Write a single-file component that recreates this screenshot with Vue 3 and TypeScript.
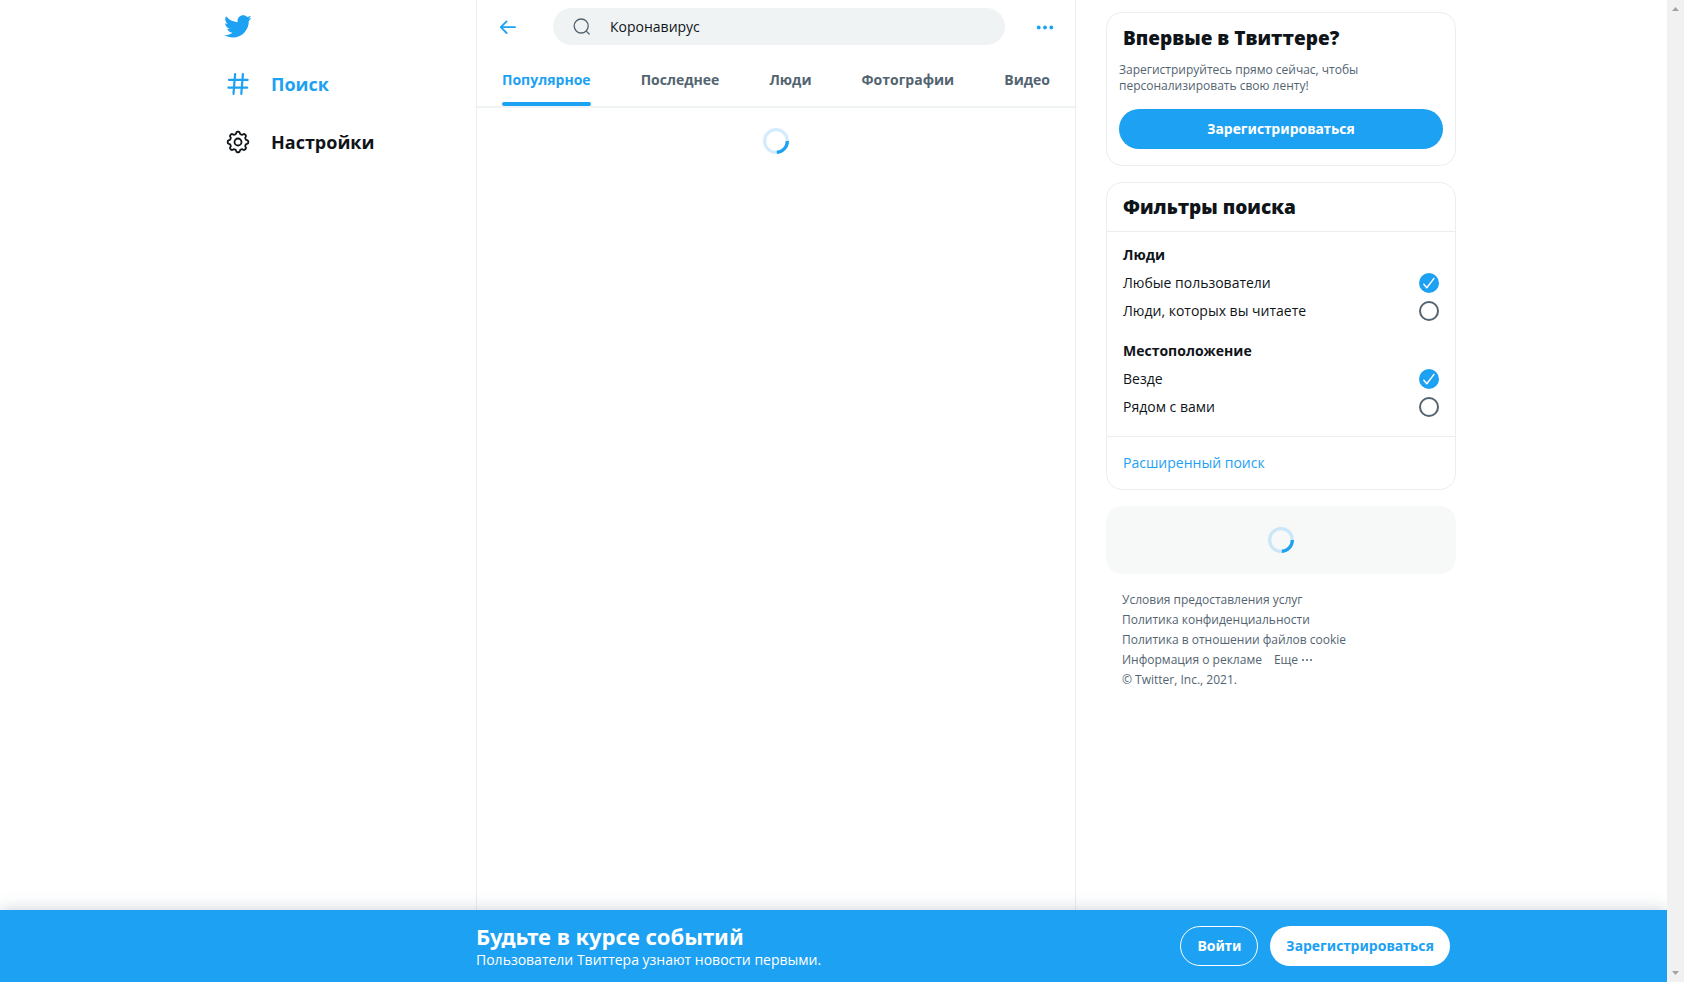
<script setup lang="ts">
import { reactive, ref } from 'vue'

interface FilterGroup {
  id: string
  title: string
  options: string[]
}

const query = ref('Коронавирус')

const tabs = ['Популярное', 'Последнее', 'Люди', 'Фотографии', 'Видео']
const activeTab = ref(tabs[0])

const groups: FilterGroup[] = [
  { id: 'people', title: 'Люди', options: ['Любые пользователи', 'Люди, которых вы читаете'] },
  { id: 'place', title: 'Местоположение', options: ['Везде', 'Рядом с вами'] },
]
const selected = reactive<Record<string, string>>({
  people: 'Любые пользователи',
  place: 'Везде',
})

const footerLinks = [
  'Условия предоставления услуг',
  'Политика конфиденциальности',
  'Политика в отношении файлов cookie',
  'Информация о рекламе',
]

// Outline of the settings gear: eight rounded teeth around a 26-unit box.
function gearOutline(): string {
  const steps = 128
  const points: string[] = []
  for (let i = 0; i < steps; i++) {
    const angle = (i / steps) * Math.PI * 2
    const radius = 9.2 + 1.1 * Math.tanh(2.2 * Math.cos(8 * angle))
    points.push(`${(13 + radius * Math.cos(angle)).toFixed(2)} ${(13 + radius * Math.sin(angle)).toFixed(2)}`)
  }
  return `M${points.join('L')}Z`
}
const gear = gearOutline()
</script>

<template>
  <div class="window">
    <div class="page">
      <div class="content">
        <header class="side">
          <a class="logo" href="#" aria-label="Твиттер">
            <svg viewBox="0 0 24 24" width="29" height="29" aria-hidden="true">
              <path
                fill="currentColor"
                d="M23.643 4.937c-.835.37-1.732.62-2.675.733.962-.576 1.7-1.49 2.048-2.578-.9.534-1.897.922-2.958 1.13-.85-.904-2.06-1.47-3.4-1.47-2.572 0-4.658 2.086-4.658 4.66 0 .364.042.718.12 1.06-3.873-.195-7.304-2.05-9.602-4.868-.4.69-.63 1.49-.63 2.342 0 1.616.823 3.043 2.072 3.878-.764-.025-1.482-.234-2.11-.583v.06c0 2.257 1.605 4.14 3.737 4.568-.392.106-.803.162-1.227.162-.3 0-.593-.028-.877-.082.593 1.85 2.313 3.198 4.352 3.234-1.595 1.25-3.604 1.995-5.786 1.995-.376 0-.747-.022-1.112-.065 2.062 1.323 4.51 2.093 7.14 2.093 8.57 0 13.255-7.098 13.255-13.254 0-.2-.005-.402-.014-.602.91-.658 1.7-1.477 2.323-2.41z"
              />
            </svg>
          </a>
          <nav class="nav">
            <a class="nav-link current" href="#">
              <svg viewBox="0 0 26 26" width="26" height="26" aria-hidden="true">
                <path
                  d="M10.1 3.2 8.5 22.8M17.9 3.2 16.3 22.8M4 8.9h18.6M3.4 16.7h18.8"
                  fill="none"
                  stroke="currentColor"
                  stroke-width="2.2"
                  stroke-linecap="round"
                />
              </svg>
              <span>Поиск</span>
            </a>
            <a class="nav-link" href="#">
              <svg viewBox="0 0 26 26" width="26" height="26" aria-hidden="true">
                <g fill="none" stroke="currentColor" stroke-width="1.8" stroke-linejoin="round">
                  <path :d="gear" />
                  <circle cx="13" cy="13" r="3.5" />
                </g>
              </svg>
              <span>Настройки</span>
            </a>
          </nav>
        </header>

        <main class="feed">
          <div class="search-row">
            <button class="icon-btn" type="button" aria-label="Назад">
              <svg viewBox="0 0 24 24" width="24" height="24" aria-hidden="true">
                <path
                  d="M19 12.2H5M10.6 6.4 4.8 12.2l5.8 5.8"
                  fill="none"
                  stroke="currentColor"
                  stroke-width="1.8"
                  stroke-linecap="round"
                  stroke-linejoin="round"
                />
              </svg>
            </button>
            <label class="search">
              <svg viewBox="0 0 20 20" width="20" height="20" aria-hidden="true">
                <g fill="none" stroke="currentColor" stroke-width="1.3" stroke-linecap="round">
                  <circle cx="9.2" cy="9" r="7" />
                  <path d="m14.3 14.1 2.9 2.9" />
                </g>
              </svg>
              <input v-model="query" type="text" aria-label="Поисковый запрос" />
            </label>
            <button class="icon-btn" type="button" aria-label="Еще">
              <svg viewBox="0 0 24 24" width="24" height="24" aria-hidden="true">
                <g fill="currentColor">
                  <circle cx="5.7" cy="12.5" r="1.9" />
                  <circle cx="12" cy="12.5" r="1.9" />
                  <circle cx="18.3" cy="12.5" r="1.9" />
                </g>
              </svg>
            </button>
          </div>
          <div class="tabs" role="tablist">
            <button
              v-for="tab in tabs"
              :key="tab"
              class="tab"
              :class="{ active: tab === activeTab }"
              type="button"
              role="tab"
              :aria-selected="tab === activeTab"
              @click="activeTab = tab"
            >
              {{ tab }}
            </button>
          </div>
          <div class="loading">
            <svg class="spinner" viewBox="0 0 32 32" width="26" height="26" role="img" aria-label="Загрузка">
              <circle cx="16" cy="16" r="14" />
              <path d="M30 16A14 14 0 0 1 17 30" />
            </svg>
          </div>
        </main>

        <aside class="rail">
          <section class="card signup">
            <h2>Впервые в Твиттере?</h2>
            <p>Зарегистрируйтесь прямо сейчас, чтобы персонализировать свою ленту!</p>
            <button class="pill primary" type="button">Зарегистрироваться</button>
          </section>

          <section class="card filters">
            <h2>Фильтры поиска</h2>
            <div class="groups">
              <fieldset v-for="group in groups" :key="group.id">
                <legend>{{ group.title }}</legend>
                <label v-for="option in group.options" :key="option" class="option">
                  <span>{{ option }}</span>
                  <span class="radio">
                    <input v-model="selected[group.id]" type="radio" :name="group.id" :value="option" />
                    <svg viewBox="0 0 20 20" width="20" height="20" aria-hidden="true">
                      <path
                        d="m4.8 11.2 3 3.6 7.2-9.4"
                        fill="none"
                        stroke="#fff"
                        stroke-width="1.4"
                        stroke-linecap="round"
                        stroke-linejoin="round"
                      />
                    </svg>
                  </span>
                </label>
              </fieldset>
            </div>
            <a class="advanced" href="#">Расширенный поиск</a>
          </section>

          <div class="placeholder">
            <svg class="spinner" viewBox="0 0 32 32" width="26" height="26" role="img" aria-label="Загрузка">
              <circle cx="16" cy="16" r="14" />
              <path d="M30 16A14 14 0 0 1 17 30" />
            </svg>
          </div>

          <footer class="legal">
            <a v-for="link in footerLinks" :key="link" href="#">{{ link }}</a>
            <button type="button">
              Еще
              <svg viewBox="0 0 12 12" width="12" height="12" aria-hidden="true">
                <g fill="currentColor">
                  <circle cx="2" cy="6" r="1" />
                  <circle cx="6" cy="6" r="1" />
                  <circle cx="10" cy="6" r="1" />
                </g>
              </svg>
            </button>
            <span>© Twitter, Inc., 2021.</span>
          </footer>
        </aside>
      </div>

      <section class="banner">
        <div class="banner-inner">
          <div class="banner-text">
            <strong>Будьте в курсе событий</strong>
            <span>Пользователи Твиттера узнают новости первыми.</span>
          </div>
          <div class="banner-actions">
            <button class="pill outline" type="button">Войти</button>
            <button class="pill light" type="button">Зарегистрироваться</button>
          </div>
        </div>
      </section>
    </div>

    <div class="scrollbar" aria-hidden="true">
      <svg viewBox="0 0 7 4" width="7" height="4"><path d="M0 4 3.5 0 7 4z" fill="#a3a3a3" /></svg>
      <svg viewBox="0 0 7 4" width="7" height="4"><path d="M0 0 3.5 4 7 0z" fill="#a3a3a3" /></svg>
    </div>
  </div>
</template>

<style>
body {
  margin: 0;
  background: #fff;
}
</style>

<style scoped>
.window {
  --blue: #1da1f2;
  --ink: #0f1419;
  --muted: #536471;
  --line: #ebeef0;
  display: flex;
  min-height: 100vh;
  color: var(--ink);
  font: 14px/20px "Open Sans", "Noto Sans", sans-serif;
}

.window *,
.window *::after {
  box-sizing: border-box;
}

svg {
  display: block;
  flex: none;
}

a {
  color: inherit;
  text-decoration: none;
}

button {
  margin: 0;
  padding: 0;
  border: 0;
  background: none;
  color: inherit;
  font: inherit;
  cursor: pointer;
}

h2 {
  margin: 0;
  font-size: 19px;
  font-weight: 800;
  line-height: 24px;
}

.page {
  flex: 1;
  min-width: 0;
  display: flex;
  flex-direction: column;
}

.content {
  flex: 1;
  width: 100%;
  max-width: 1265px;
  margin: 0 auto;
  display: grid;
  grid-template-columns: 275px minmax(0, 600px) 380px;
}

.side {
  padding: 12px 0 0 24px;
}

.logo {
  display: block;
  width: 29px;
  margin-left: -2px;
  color: var(--blue);
}

.nav {
  margin-top: 14px;
}

.nav-link {
  display: flex;
  align-items: center;
  gap: 20px;
  height: 58px;
  font-size: 18px;
  font-weight: 700;
}

.current {
  color: var(--blue);
}

.feed {
  border: solid var(--line);
  border-width: 0 1px;
}

.search-row {
  display: flex;
  align-items: center;
  height: 53px;
  padding: 0 14px 0 15px;
}

.icon-btn {
  display: grid;
  place-items: center;
  width: 32px;
  height: 32px;
  color: var(--blue);
}

.search {
  flex: 1;
  min-width: 0;
  display: flex;
  align-items: center;
  gap: 18px;
  height: 37px;
  margin: 0 24px 0 29px;
  padding: 0 19px;
  border-radius: 19px;
  background: #eff3f4;
  color: var(--muted);
}

.search input {
  flex: 1;
  min-width: 0;
  padding: 1px 0 0;
  border: 0;
  outline: 0;
  background: none;
  color: var(--ink);
  font: inherit;
}

.tabs {
  display: flex;
  justify-content: space-around;
  border-bottom: 2px solid #eff3f4;
}

.tab {
  position: relative;
  height: 53px;
  color: var(--muted);
  font-weight: 700;
}

.tab.active {
  color: var(--blue);
}

.tab.active::after {
  content: "";
  position: absolute;
  right: 0;
  bottom: 0;
  left: 0;
  height: 4px;
  border-radius: 2px;
  background: var(--blue);
}

.loading {
  display: flex;
  justify-content: center;
  padding: 20px;
}

.spinner {
  fill: none;
  stroke: var(--blue);
  stroke-width: 4;
}

.spinner circle {
  opacity: 0.2;
}

.rail {
  display: flex;
  flex-direction: column;
  gap: 16px;
  padding: 12px 0 0 30px;
}

.card {
  border: 1px solid var(--line);
  border-radius: 16px;
}

.signup {
  padding: 13px 12px 16px;
}

.signup h2 {
  padding: 0 4px;
}

.signup p {
  margin: 12px 0 15px;
  color: var(--muted);
  font-size: 12px;
  line-height: 16px;
}

.pill {
  height: 40px;
  padding: 0 16px;
  border-radius: 20px;
  font-family: "Noto Sans", "Open Sans", sans-serif;
  font-weight: 700;
}

.primary {
  width: 100%;
  background: var(--blue);
  color: #fff;
}

.filters h2 {
  padding: 12px 16px;
  border-bottom: 1px solid var(--line);
}

.groups {
  display: grid;
  gap: 12px;
  padding: 9px 16px 15px;
  border-bottom: 1px solid var(--line);
}

fieldset {
  margin: 0;
  padding: 0;
  border: 0;
  min-width: 0;
}

legend {
  padding: 0;
  font-weight: 700;
  line-height: 28px;
}

.option {
  display: flex;
  align-items: center;
  justify-content: space-between;
  height: 28px;
}

.radio {
  position: relative;
  width: 20px;
  height: 20px;
}

.radio input {
  appearance: none;
  display: block;
  width: 20px;
  height: 20px;
  margin: 0;
  border: 2px solid var(--muted);
  border-radius: 50%;
}

.radio input:checked {
  border-color: var(--blue);
  background: var(--blue);
}

.radio svg {
  position: absolute;
  inset: 0;
  visibility: hidden;
  pointer-events: none;
}

.radio input:checked + svg {
  visibility: visible;
}

.advanced {
  display: block;
  padding: 16px;
  color: var(--blue);
}

.placeholder {
  display: grid;
  place-items: center;
  height: 68px;
  border-radius: 16px;
  background: #f7f9f9;
}

.legal {
  display: flex;
  flex-wrap: wrap;
  column-gap: 12px;
  padding: 0 60px 0 16px;
  color: var(--muted);
  font-size: 12px;
  line-height: 20px;
}

.legal button {
  display: flex;
  align-items: center;
  gap: 3px;
}

.banner {
  background: var(--blue);
  box-shadow: 0 0 15px rgba(101, 119, 134, 0.35);
  color: #fff;
}

.banner-inner {
  display: flex;
  align-items: center;
  justify-content: space-between;
  max-width: 1265px;
  margin: 0 auto;
  padding: 12px 16px 12px 275px;
}

.banner-text {
  display: grid;
}

.banner-text strong {
  font-family: "Noto Sans", "Open Sans", sans-serif;
  font-size: 22px;
  font-weight: 700;
  line-height: 28px;
}

.banner-actions {
  display: flex;
  gap: 12px;
}

.outline {
  border: 1px solid #fff;
}

.light {
  background: #fff;
  color: var(--blue);
}

.scrollbar {
  position: sticky;
  top: 0;
  display: flex;
  flex-direction: column;
  align-items: center;
  justify-content: space-between;
  width: 17px;
  height: 100vh;
  padding: 7px 0;
  background: #f1f1f1;
}
</style>
